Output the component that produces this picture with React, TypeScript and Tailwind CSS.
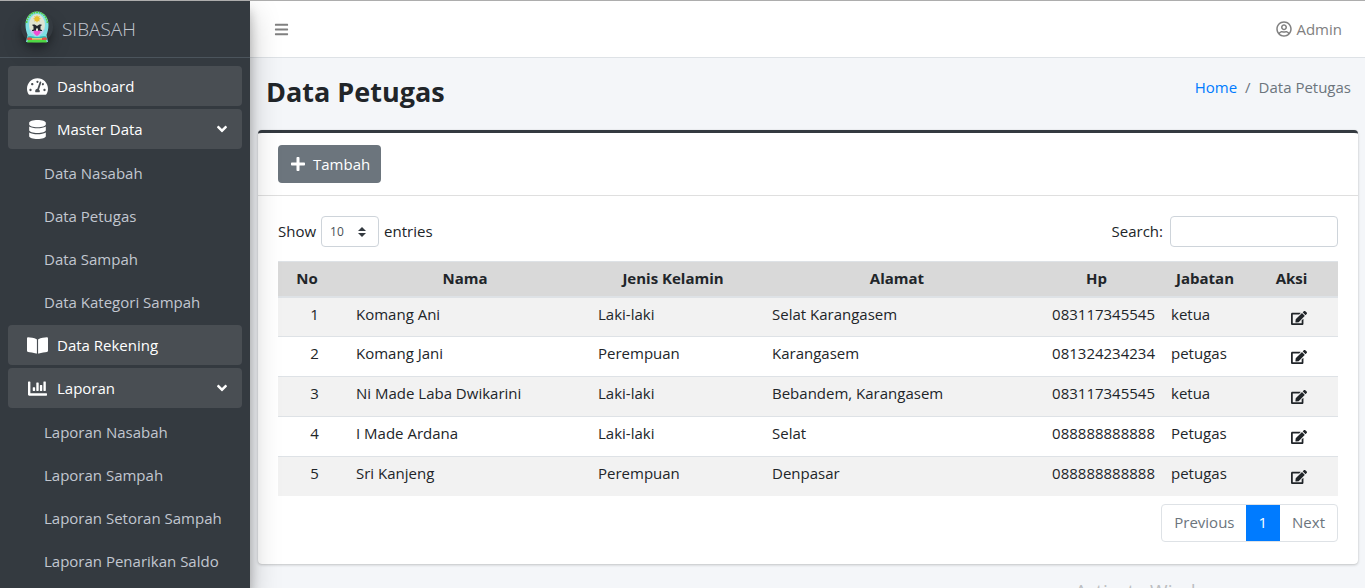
import React, { useState } from "react";
import {
  FaAngleDown,
  FaBars,
  FaBookOpen,
  FaChartBar,
  FaDatabase,
  FaEdit,
  FaPlus,
  FaRegUserCircle,
  FaTachometerAlt,
} from "react-icons/fa";

type Officer = {
  name: string;
  gender: string;
  address: string;
  phone: string;
  role: string;
};

const officers: Officer[] = [
  { name: "Komang Ani", gender: "Laki-laki", address: "Selat Karangasem", phone: "083117345545", role: "ketua" },
  { name: "Komang Jani", gender: "Perempuan", address: "Karangasem", phone: "081324234234", role: "petugas" },
  { name: "Ni Made Laba Dwikarini", gender: "Laki-laki", address: "Bebandem, Karangasem", phone: "083117345545", role: "ketua" },
  { name: "I Made Ardana", gender: "Laki-laki", address: "Selat", phone: "088888888888", role: "Petugas" },
  { name: "Sri Kanjeng", gender: "Perempuan", address: "Denpasar", phone: "088888888888", role: "petugas" },
];

function Logo() {
  return (
    <svg viewBox="0 0 24 32" className="h-8 w-6" aria-hidden="true">
      <path d="M12 0.500C18.500 0.500 23.500 6 23.500 14C23.500 18 22.500 21 21.500 24L23 31H1L2.500 24C1.500 21 0.500 18 0.500 14C0.500 6 5.500 0.500 12 0.500Z" fill="#7fe0e4" />
      <path d="M1.500 12C2.500 5 6.500 1.300 12 1.300S21.500 5 22.500 12" fill="none" stroke="#58c93c" strokeWidth="1.700" strokeDasharray="1.800 .8" />
      <ellipse cx="12" cy="14" rx="8" ry="11" fill="#dfe3d2" />
      <path d="M4.200 17c1 5 3.500 7.500 7.800 8 4.300-.5 6.800-3 7.800-8l-2 2.500-3 1h-5.600l-3-1z" fill="#b9c8ee" />
      <path d="M12 4l.9 1.800 1.900-.8-.7 1.900 1.900.9-1.900.9.700 1.900-1.900-.7-.9 1.900-.9-1.900-1.900.7.700-1.900L8 7.800l1.900-.9L9.200 5l1.900.8z" fill="#e6bd2d" />
      <path d="M7.500 13.500h2.200L12 15l2.300-1.500h2.200v1.200l-1 .5v3.300l1.500.5v1h-4v-3l-1 .9-1-.9v3H7v-1l1.500-.5v-3.300l-1-.5z" fill="#23262e" />
      <path d="M12 25c-2.200-1.400-3.600-2.800-3.500-4.200.1-1.500 2.500-1.700 3.500-.5 1-1.200 3.400-1 3.500.5.100 1.400-1.300 2.800-3.500 4.200z" fill="#f04fd4" />
      <path d="M2.500 25.500c3-1.500 6 .5 9.500.5s6.500-2 9.500-.5l.5 3.500H2z" fill="#30bdb5" />
      <path d="M2 27c2.500-1.500 5 0 6.500 1.200h7C17 27 19.500 25.500 22 27l-.5 2.200h-19z" fill="#e0534a" />
      <path d="M7 27.200h10v1.300H7z" fill="#f0dd6a" />
      <path d="M3 29h18l1 2.500H2z" fill="#4fd944" />
    </svg>
  );
}

function MenuLink({ icon, label, expandable }: { icon: React.ReactNode; label: string; expandable?: boolean }) {
  return (
    <a href="#" className="flex h-10 items-center rounded bg-[#494e53] pr-3 pl-[17px] text-white">
      <span className="mr-[7px] flex w-[25px] justify-center">{icon}</span>
      <span className="flex-1">{label}</span>
      {expandable && <FaAngleDown className="size-4" />}
    </a>
  );
}

function SubMenu({ items }: { items: string[] }) {
  return (
    <ul className="flex flex-col gap-[3px] pt-1">
      {items.map((item) => (
        <li key={item}>
          <a href="#" className="flex h-10 items-center pl-9 text-[#c2c7d0]">
            {item}
          </a>
        </li>
      ))}
    </ul>
  );
}

function Sidebar() {
  return (
    <aside className="z-10 flex w-[250px] shrink-0 flex-col bg-[#343a40] shadow-[0_14px_28px_rgba(0,0,0,0.25),0_10px_10px_rgba(0,0,0,0.22)]">
      <a href="#" className="flex h-[57px] items-center gap-[9px] border-b border-[#4b545c] pl-[21px] text-[#c2c7d0]">
        <span className="mb-1 flex size-8 items-center justify-center rounded-full shadow-[0_10px_20px_rgba(0,0,0,0.19),0_6px_6px_rgba(0,0,0,0.23)]">
          <Logo />
        </span>
        <span className="text-[19px] font-light">SIBASAH</span>
      </a>
      <nav className="px-2 pt-2">
        <ul className="flex flex-col gap-[3px]">
          <li>
            <MenuLink icon={<FaTachometerAlt className="size-[21px]" />} label="Dashboard" />
          </li>
          <li>
            <MenuLink icon={<FaDatabase className="size-[19px]" />} label="Master Data" expandable />
            <SubMenu items={["Data Nasabah", "Data Petugas", "Data Sampah", "Data Kategori Sampah"]} />
          </li>
          <li>
            <MenuLink icon={<FaBookOpen className="size-[21px]" />} label="Data Rekening" />
          </li>
          <li>
            <MenuLink icon={<FaChartBar className="size-[19px]" />} label="Laporan" expandable />
            <SubMenu items={["Laporan Nasabah", "Laporan Sampah", "Laporan Setoran Sampah", "Laporan Penarikan Saldo"]} />
          </li>
        </ul>
      </nav>
    </aside>
  );
}

function OfficerTable({ rows }: { rows: Officer[] }) {
  return (
    <table className="mt-[14px] w-full table-fixed border-collapse">
      <colgroup>
        <col className="w-[66px]" />
        <col className="w-[242px]" />
        <col className="w-[174px]" />
        <col className="w-[274px]" />
        <col className="w-[125px]" />
        <col className="w-[92px]" />
        <col className="w-[87px]" />
      </colgroup>
      <thead>
        <tr className="h-[35px] border-t border-b-2 border-[#dee2e6] bg-[#d9d9d9] *:pb-[2px]">
          <th className="pr-2">No</th>
          <th>Nama</th>
          <th>Jenis Kelamin</th>
          <th>Alamat</th>
          <th>Hp</th>
          <th>Jabatan</th>
          <th className="pr-[6px]">Aksi</th>
        </tr>
      </thead>
      <tbody>
        {rows.map((row, index) => (
          <tr key={row.name} className="h-10 border-t border-[#dee2e6] align-top leading-6 last:h-[39px] odd:bg-[#f2f2f2]">
            <td className="pt-1 pl-[7px] text-center">{index + 1}</td>
            <td className="px-3 pt-1">{row.name}</td>
            <td className="px-3 pt-1">{row.gender}</td>
            <td className="px-3 pt-1">{row.address}</td>
            <td className="pt-1 pr-1 text-right">{row.phone}</td>
            <td className="px-3 pt-1">{row.role}</td>
            <td className="pt-3 pl-2">
              <button type="button" aria-label={`Edit ${row.name}`} className="mx-auto block">
                <FaEdit className="size-4" />
              </button>
            </td>
          </tr>
        ))}
      </tbody>
    </table>
  );
}

export default function App() {
  const [query, setQuery] = useState("");
  const rows = officers.filter((o) => Object.values(o).join(" ").toLowerCase().includes(query.toLowerCase()));

  return (
    <div className="relative flex min-h-screen overflow-hidden border-t border-[#adadad] bg-[#f4f6f9] font-['Open_Sans','Noto_Sans',sans-serif] text-[15px] text-[#212529]">
      <Sidebar />
      <div className="flex min-w-0 flex-1 flex-col">
        <header className="flex h-[57px] items-center justify-between border-b border-[#dee2e6] bg-white pr-[23px] pl-6 text-[#808080]">
          <button type="button" aria-label="Menu">
            <FaBars className="size-[15px]" />
          </button>
          <a href="#" className="flex items-center gap-1">
            <FaRegUserCircle className="size-4" />
            Admin
          </a>
        </header>

        <main className="pr-[7px] pl-2">
          <div className="flex items-start justify-between pr-[7px] pl-2">
            <h1 className="pt-[14px] text-[27px] leading-10 font-bold">Data Petugas</h1>
            <nav aria-label="Breadcrumb" className="flex gap-2 pt-[17px] leading-6 text-[#6c757d]">
              <a href="#" className="text-[#007bff]">Home</a>
              <span>/</span>
              <span>Data Petugas</span>
            </nav>
          </div>

          <section className="mt-[18px] rounded border-t-[3px] border-[#343a40] bg-white shadow-[0_0_1px_rgba(0,0,0,0.125),0_1px_3px_rgba(0,0,0,0.2)]">
            <div className="border-b border-[#dfdfdf] px-5 py-3">
              <button type="button" className="flex h-[38px] items-center gap-[7px] rounded bg-[#6c757d] pr-[11px] pl-3 text-white">
                <FaPlus className="size-4" />
                Tambah
              </button>
            </div>
            <div className="px-5 pt-5 pb-[22px]">
              <div className="flex items-center justify-between">
                <label className="flex items-center gap-[5px]">
                  Show
                  <span className="relative">
                    <select className="block h-[31px] w-[58px] appearance-none rounded border border-[#ced4da] bg-white pl-2 text-xs text-[#495057]">
                      <option>10</option>
                      <option>25</option>
                      <option>50</option>
                      <option>100</option>
                    </select>
                    <svg viewBox="0 0 8 10" className="pointer-events-none absolute top-[11px] right-[13px] h-[10px] w-2" aria-hidden="true">
                      <path d="M4 0L0 4h8zM4 10L0 6h8z" fill="#343a40" />
                    </svg>
                  </span>
                  entries
                </label>
                <label className="flex items-center gap-[7px]">
                  Search:
                  <input
                    type="search"
                    value={query}
                    onChange={(e) => setQuery(e.target.value)}
                    className="h-[31px] w-[168px] rounded border border-[#ced4da] bg-white px-2 text-sm"
                  />
                </label>
              </div>

              <OfficerTable rows={rows} />

              <div className="mt-2 flex justify-end">
                <div className="flex h-[38px] overflow-hidden rounded border border-[#dee2e6] text-[#6c757d]">
                  <button type="button" className="pr-[11px] pl-3">Previous</button>
                  <button type="button" className="-my-px bg-[#007bff] px-[13px] text-white">1</button>
                  <button type="button" className="px-3">Next</button>
                </div>
              </div>
            </div>
          </section>
        </main>
      </div>
      <div className="pointer-events-none absolute top-[578px] left-[1075px] text-[19px] leading-6 whitespace-nowrap text-[#bcbec1]">
        Activate Windows
      </div>
    </div>
  );
}
